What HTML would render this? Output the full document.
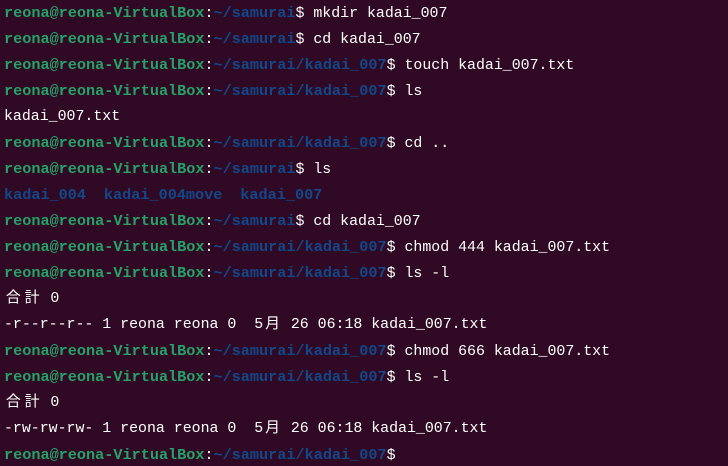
<!DOCTYPE html>
<html><head><meta charset="utf-8"><style>
html,body{margin:0;padding:0;background:#300a24;width:728px;height:466px;overflow:hidden}
.t{padding-left:4px;font-family:"Liberation Mono","Noto Sans CJK JP",monospace;font-size:14.9px;color:#ffffff}
.t div{height:26px;line-height:26px;white-space:pre;overflow:hidden}
.g{color:#26a269;font-weight:bold;font-size:15.2px}
.b{color:#12488b;font-weight:bold;font-size:15.2px}
.c{display:inline-block;width:2.1ch;text-align:center}
</style></head><body><div class="t">
<div><span class="g">reona@reona-VirtualBox</span>:<span class="b">~/samurai</span>$ mkdir kadai_007</div>
<div><span class="g">reona@reona-VirtualBox</span>:<span class="b">~/samurai</span>$ cd kadai_007</div>
<div><span class="g">reona@reona-VirtualBox</span>:<span class="b">~/samurai/kadai_007</span>$ touch kadai_007.txt</div>
<div><span class="g">reona@reona-VirtualBox</span>:<span class="b">~/samurai/kadai_007</span>$ ls</div>
<div>kadai_007.txt</div>
<div><span class="g">reona@reona-VirtualBox</span>:<span class="b">~/samurai/kadai_007</span>$ cd ..</div>
<div><span class="g">reona@reona-VirtualBox</span>:<span class="b">~/samurai</span>$ ls</div>
<div><span class="b">kadai_004</span>  <span class="b">kadai_004move</span>  <span class="b">kadai_007</span></div>
<div><span class="g">reona@reona-VirtualBox</span>:<span class="b">~/samurai</span>$ cd kadai_007</div>
<div><span class="g">reona@reona-VirtualBox</span>:<span class="b">~/samurai/kadai_007</span>$ chmod 444 kadai_007.txt</div>
<div><span class="g">reona@reona-VirtualBox</span>:<span class="b">~/samurai/kadai_007</span>$ ls -l</div>
<div><span class="c">合</span><span class="c">計</span> 0</div>
<div>-r--r--r-- 1 reona reona 0  5<span class="c">月</span> 26 06:18 kadai_007.txt</div>
<div><span class="g">reona@reona-VirtualBox</span>:<span class="b">~/samurai/kadai_007</span>$ chmod 666 kadai_007.txt</div>
<div><span class="g">reona@reona-VirtualBox</span>:<span class="b">~/samurai/kadai_007</span>$ ls -l</div>
<div><span class="c">合</span><span class="c">計</span> 0</div>
<div>-rw-rw-rw- 1 reona reona 0  5<span class="c">月</span> 26 06:18 kadai_007.txt</div>
<div><span class="g">reona@reona-VirtualBox</span>:<span class="b">~/samurai/kadai_007</span>$ </div>
</div></body></html>
